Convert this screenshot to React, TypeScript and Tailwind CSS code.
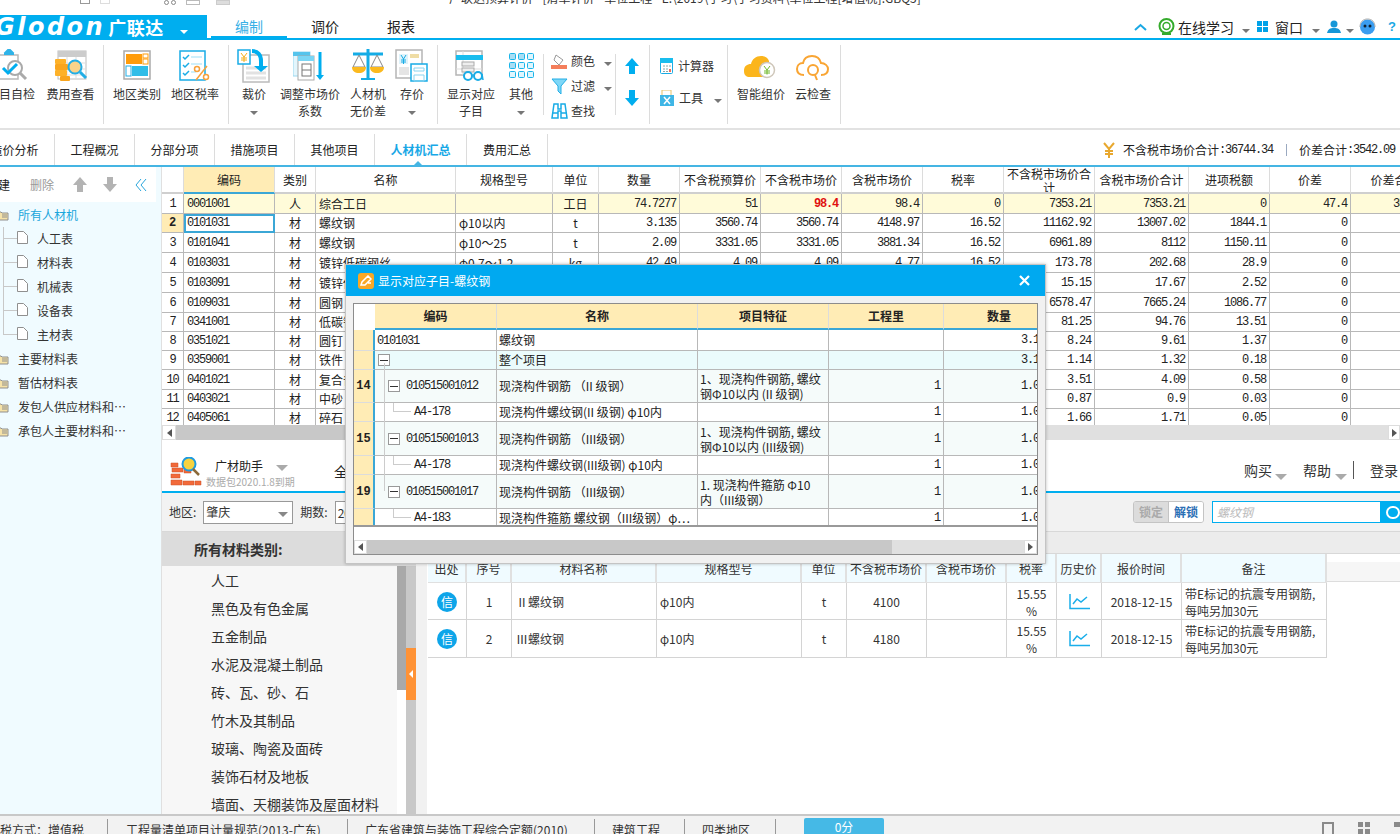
import type { ReactNode } from "react";

const mono = "font-['Liberation_Mono','Noto_Sans_CJK_SC',monospace] text-[12px] tracking-[-1.2px]";

function Caret({ className = "border-t-[#777]" }: { className?: string }) {
  return <span className={`inline-block w-0 h-0 border-x-[4px] border-x-transparent border-t-[4px] ${className}`} />;
}

/* ---------- ribbon icons ---------- */
function Svg({ children, w = 34, h = 34 }: { children: ReactNode; w?: number; h?: number }) {
  return (
    <svg width={w} height={h} viewBox={`0 0 ${w} ${h}`} fill="none" className="shrink-0">
      {children}
    </svg>
  );
}

const icons: Record<string, ReactNode> = {
  check: (
    <Svg>
      <rect x="2" y="6" width="22" height="24" fill="#fff" stroke="#b9b9b9" strokeWidth="1.5" />
      <path d="M12 3h6l-3-3zM10 5h10" stroke="#2fb3e8" strokeWidth="2" />
      <circle cx="21" cy="19" r="7" fill="#fff" stroke="#aaa" strokeWidth="2" />
      <path d="M26 24l6 6" stroke="#aaa" strokeWidth="3" />
      <path d="M9 19l5 5 9-9" stroke="#00aeef" strokeWidth="3" />
    </Svg>
  ),
  fee: (
    <Svg>
      <rect x="4" y="2" width="28" height="28" fill="#fff" stroke="#bdbdbd" />
      <rect x="4" y="2" width="28" height="6" fill="#ccc" />
      <path d="M4 14h28M4 20h28M4 26h28M13 8v22M22 8v22" stroke="#ddd" />
      <rect x="1" y="10" width="11" height="5" rx="1" fill="#fdb129" />
      <rect x="1" y="15" width="13" height="6" rx="1" fill="#f9a51e" />
      <rect x="1" y="21" width="12" height="6" rx="1" fill="#fdb129" />
      <rect x="6" y="27" width="10" height="5" rx="1" fill="#f9a51e" />
      <circle cx="21" cy="18" r="6.5" fill="#fbd38a" stroke="#23aee6" strokeWidth="2" />
      <path d="M26 23l6 6" stroke="#23aee6" strokeWidth="3" />
    </Svg>
  ),
  area: (
    <Svg>
      <rect x="4" y="2" width="26" height="28" fill="#fff" stroke="#aaa" strokeWidth="1.5" />
      <rect x="6" y="5" width="16" height="10" fill="#ff9c0a" />
      <rect x="23" y="5" width="5" height="4" fill="#fff" stroke="#ff9c0a" />
      <rect x="23" y="10" width="5" height="5" fill="#fff" stroke="#ff9c0a" />
      <rect x="6" y="17" width="5" height="10" fill="#fff" stroke="#23aee6" />
      <rect x="12" y="17" width="16" height="10" fill="#2fbde8" />
    </Svg>
  ),
  tax: (
    <Svg>
      <rect x="2" y="2" width="25" height="29" fill="#fff" stroke="#19ace6" strokeWidth="1.5" />
      <path d="M5 8l2 2 4-4M5 16l2 2 4-4M5 24l2 2 4-4" stroke="#19ace6" strokeWidth="1.5" />
      <path d="M13 8h11M13 15h11M13 23h5" stroke="#bfeafa" strokeWidth="1.5" />
      <circle cx="19" cy="20" r="2.5" fill="#fff" stroke="#f7a13b" strokeWidth="1.5" />
      <circle cx="28" cy="28" r="2.5" fill="#fff" stroke="#f7a13b" strokeWidth="1.5" />
      <path d="M29 17L18 31" stroke="#f7a13b" strokeWidth="1.5" />
    </Svg>
  ),
  cut: (
    <Svg>
      <rect x="6" y="6" width="26" height="27" fill="#fff" stroke="#bbb" strokeWidth="1.5" />
      <path d="M9 19h20M9 24h20M9 29h20" stroke="#e2e2e2" strokeWidth="3" />
      <rect x="1" y="1" width="12" height="14" fill="#fff" stroke="#19ace6" strokeWidth="1.5" />
      <path d="M4 4l3 4 3-4M7 8v5M4 9h6M4 11h6" stroke="#f3ad19" />
      <path d="M15 2c6 0 9 4 9 10v6" stroke="#00aeef" strokeWidth="4" />
      <path d="M17 17h14l-7 6z" fill="#00aeef" />
    </Svg>
  ),
  adjust: (
    <Svg>
      <rect x="0" y="3" width="17" height="24" fill="#e3f6fd" stroke="#9bd8ef" />
      <rect x="0" y="3" width="17" height="4" fill="#55c4ec" />
      <rect x="5" y="7" width="16" height="24" fill="#fff" stroke="#aaa" />
      <rect x="5" y="7" width="16" height="5" fill="#7ad6f5" />
      <rect x="9" y="15" width="9" height="12" fill="#fff" stroke="#777" />
      <path d="M9 21h9" stroke="#777" />
      <path d="M27 3v24" stroke="#00aeef" strokeWidth="3" />
      <path d="M23 26h8l-4 5z" fill="#00aeef" />
    </Svg>
  ),
  scale: (
    <Svg>
      <path d="M17 0v29M2 5h30" stroke="#14ace6" strokeWidth="3" />
      <path d="M10 31h14v-2H10z" fill="#14ace6" />
      <path d="M8 6L2 18h12zM26 6l-6 12h12z" stroke="#888" fill="#fff" />
      <path d="M1 18h14c0 4-3 6-7 6s-7-2-7-6zM19 18h14c0 4-3 6-7 6s-7-2-7-6z" fill="#fbb91e" />
    </Svg>
  ),
  save: (
    <Svg>
      <rect x="1" y="1" width="26" height="28" fill="#fff" stroke="#b5b5b5" strokeWidth="1.5" />
      <rect x="4" y="5" width="9" height="10" fill="#dff3fb" />
      <path d="M6 6l2.500 4 2.500-4M8.500 10v5M6 11h5M6 13h5" stroke="#18ace6" />
      <rect x="15" y="5" width="9" height="4" fill="#efdda5" />
      <rect x="4" y="18" width="10" height="8" fill="#e5e5e5" />
      <rect x="16" y="15" width="16" height="17" fill="#fff" stroke="#19ace6" strokeWidth="1.5" />
      <path d="M19 19h10v3H19zM19 26h10v6H19z" stroke="#8ad4f0" />
    </Svg>
  ),
  show: (
    <Svg>
      <rect x="2" y="2" width="26" height="24" fill="#fff" stroke="#b5b5b5" strokeWidth="1.5" />
      <path d="M2 8h26M2 20h26M9 2v24" stroke="#ddd" />
      <rect x="2" y="6" width="27" height="5" fill="#19bdee" />
      <rect x="8" y="13" width="12" height="4" fill="#eee" stroke="#aaa" />
      <rect x="8" y="19" width="12" height="4" fill="#eee" stroke="#aaa" />
      <circle cx="14" cy="27" r="4" fill="#fff" stroke="#19ace6" strokeWidth="2" />
      <circle cx="24" cy="27" r="4" fill="#fff" stroke="#19ace6" strokeWidth="2" />
      <path d="M28 25l1 6" stroke="#19ace6" strokeWidth="1.500" />
    </Svg>
  ),
  more: (
    <Svg>
      {[0, 1, 2].map((r) =>
        [0, 1, 2].map((c) => (
          <rect
            key={`${r}${c}`}
            x={5.5 + c * 9}
            y={4.5 + r * 9}
            width="6"
            height="6"
            rx="1"
            fill={r + c < 2 ? "#a9def4" : "#dff5fd"}
            stroke="#19b5ea"
          />
        )),
      )}
    </Svg>
  ),
  smart: (
    <Svg w={36} h={34}>
      <path d="M1 22c0-5 3-7 7-7 1-5 5-8 10-8 4 0 7 2 8 5v16H7c-4 0-6-2-6-6z" fill="#fbb51c" />
      <circle cx="24" cy="21" r="7.500" fill="#fff" stroke="#cfc7ba" strokeWidth="1.500" />
      <path d="M21 17l3 4 3-4M24 21v4.500M21 22h6M21 24h6" stroke="#70b92c" />
    </Svg>
  ),
  cloud: (
    <Svg w={36} h={34}>
      <path
        d="M9 26c-4 0-7-2-7-6 0-3 2-6 6-6 1-5 5-7 9-7 5 0 8 3 9 7 4 0 7 3 7 6 0 4-3 6-7 6"
        stroke="#f9a533"
        strokeWidth="2"
      />
      <circle cx="18" cy="21" r="5" stroke="#f9a533" strokeWidth="2" />
      <path d="M20 26l2 5" stroke="#f9a533" strokeWidth="2" />
    </Svg>
  ),
};

function RibbonBtn({ w, icon, label, caret }: { w: string; icon: string; label: string; caret?: boolean }) {
  return (
    <div className={`${w} shrink-0 flex flex-col items-center pt-[8px]`}>
      <div className="h-[36px] flex items-center justify-center">{icons[icon]}</div>
      <div className="mt-[1px] text-[12px] leading-[17px] text-center text-[#333] whitespace-pre-line">{label}</div>
      {caret && (
        <div className="mt-[2px] leading-[8px]">
          <Caret />
        </div>
      )}
    </div>
  );
}

function RibbonGroup({ w, children }: { w: string; children: ReactNode }) {
  return (
    <div className={`${w} shrink-0 h-[79px] mt-[5px] flex border-r border-[#dcdcdc]`}>
      <div className="flex -mt-[5px] h-[88px]">{children}</div>
    </div>
  );
}

function Ribbon() {
  return (
    <div className="h-[90px] flex border-b-2 border-[#e2e2e2] overflow-hidden">
      <RibbonGroup w="w-[104px]">
        <div className="-ml-[19px] flex">
          <RibbonBtn w="w-[60px]" icon="check" label="项目自检" />
          <RibbonBtn w="w-[59px]" icon="fee" label="费用查看" />
        </div>
      </RibbonGroup>
      <RibbonGroup w="w-[125px]">
        <div className="ml-[4px] flex">
          <RibbonBtn w="w-[58px]" icon="area" label="地区类别" />
          <RibbonBtn w="w-[58px]" icon="tax" label="地区税率" />
        </div>
      </RibbonGroup>
      <RibbonGroup w="w-[209px]">
        <div className="ml-[5px] flex">
          <RibbonBtn w="w-[40px]" icon="cut" label="裁价" caret />
          <RibbonBtn w="w-[72px]" icon="adjust" label={"调整市场价\n系数"} />
          <RibbonBtn w="w-[44px]" icon="scale" label={"人材机\n无价差"} />
          <RibbonBtn w="w-[44px]" icon="save" label="存价" caret />
        </div>
      </RibbonGroup>
      <RibbonGroup w="w-[212px]">
        <div className="ml-[5px] flex shrink-0">
          <RibbonBtn w="w-[56px]" icon="show" label={"显示对应\n子目"} />
          <RibbonBtn w="w-[44px]" icon="more" label="其他" caret />
          <div className="w-[73px] shrink-0 h-[61px] mt-[14px] border-x border-[#dcdcdc] pl-[7px] text-[12px] text-[#333] whitespace-nowrap">
            <div className="-mt-[6px]">
              <div className="h-[25px] flex items-center gap-[3px]">
                <Svg w={17} h={17}>
                  <path d="M5 3l7 5-4 5-5-5z" fill="#fff" stroke="#999" />
                  <rect x="0" y="13" width="16" height="4" fill="#f47e5b" />
                </Svg>
                <span>颜色</span>
                <span className="ml-[6px] leading-none"><Caret /></span>
              </div>
              <div className="h-[25px] flex items-center gap-[3px]">
                <Svg w={17} h={17}>
                  <path d="M1 2h15l-6 7v8l-3-3V9z" fill="#7fd7f7" stroke="#23aee6" />
                </Svg>
                <span>过滤</span>
                <span className="ml-[6px] leading-none"><Caret /></span>
              </div>
              <div className="h-[25px] flex items-center gap-[3px]">
                <Svg w={17} h={17}>
                  <path d="M3 2h4v5h3V2h4l2 14h-6V9H7v7H1z" fill="#fff" stroke="#18ace6" strokeWidth="1.500" />
                  <path d="M1 11h6M10 11h6" stroke="#18ace6" strokeWidth="1.500" />
                </Svg>
                <span>查找</span>
              </div>
            </div>
          </div>
          <div className="w-[31px] shrink-0 flex flex-col items-center pt-[17px] gap-[16px]">
            <Svg w={16} h={17}>
              <path d="M8 1l7 8h-4v8H5V9H1z" fill="#00aeef" />
            </Svg>
            <Svg w={16} h={17}>
              <path d="M8 16L1 8h4V0h6v8h4z" fill="#00aeef" />
            </Svg>
          </div>
        </div>
      </RibbonGroup>
      <RibbonGroup w="w-[78px]">
        <div className="ml-[10px] pt-[16px] flex flex-col gap-[12px] text-[12px] text-[#333] whitespace-nowrap">
          <div className="h-[20px] flex items-center gap-[5px]">
            <Svg w={13} h={16}>
              <rect x="0.500" y="0.500" width="12" height="15" rx="1" fill="#fff" stroke="#19ace6" />
              <rect x="0" y="0" width="13" height="5" fill="#19bdee" />
              <path d="M3 8h2M6 8h2M9 8h2M3 11h2M6 11h2M3 13.500h2M6 13.500h2" stroke="#8aa" />
              <path d="M9 11h2v3H9z" fill="#ef6d5a" />
            </Svg>
            <span>计算器</span>
          </div>
          <div className="h-[20px] flex items-center gap-[5px]">
            <Svg w={14} h={16}>
              <rect x="2" y="0" width="9" height="8" fill="#fff" stroke="#e6c268" />
              <rect x="0" y="5" width="14" height="11" fill="#3fb6e6" />
              <path d="M4 7l6 7M10 7l-6 7" stroke="#fff" strokeWidth="1.500" />
            </Svg>
            <span>工具</span>
            <span className="ml-[6px] leading-none"><Caret /></span>
          </div>
        </div>
      </RibbonGroup>
      <RibbonGroup w="w-[113px]">
        <div className="ml-[6px] flex">
          <RibbonBtn w="w-[54px]" icon="smart" label="智能组价" />
          <RibbonBtn w="w-[50px]" icon="cloud" label="云检查" />
        </div>
      </RibbonGroup>
    </div>
  );
}

function TopBars() {
  return (
    <>
      <div className="h-[15px] overflow-hidden relative flex">
        <div className="flex items-start gap-[10px] pl-[80px] pt-0">
          <span className="w-[10px] h-[4px] border-b border-x border-[#999]" />
          <span className="w-[10px] h-[4px] border-b border-x border-[#ddd]" />
          <span className="ml-[44px] w-[5px] h-[5px] rounded-full border border-[#888]" />
          <span className="w-[5px] h-[5px] rounded-full border border-[#888] -ml-[8px]" />
          <span className="w-[14px] h-[5px] border border-[#bbb]" />
          <span className="ml-[6px] w-[14px] h-[5px] bg-[#ddd] border border-[#ccc]" />
          <span className="ml-[6px] mt-[1px]"><Caret className="border-t-[#555]" /></span>
        </div>
        <div className="ml-[195px] -mt-[11px] text-[12px] leading-[18px] text-[#333] whitespace-nowrap">
          广联达预算计价 - [清单计价 - 单位工程 - E:\2019\学习\学习资料\单位工程[增值税].GBQ5]
        </div>
      </div>
      <div className="h-[25px] flex border-b-2 border-[#00aeef]">
        <div className="w-[207px] h-[24px] bg-[#00aeef] text-white flex items-center overflow-hidden whitespace-nowrap">
          <span className="-ml-[5px] font-['DejaVu_Sans',sans-serif] italic font-bold text-[24px] tracking-[2.5px] leading-none">Glodon</span>
          <span className="ml-[3px] text-[18px] tracking-[0.5px] leading-none font-bold">广联达</span>
          <span className="ml-[16px] leading-none"><Caret className="border-t-white" /></span>
        </div>
        <div className="ml-[4px] w-[76px] h-[25px] text-center text-[14px] leading-[23px] text-[#3ab0e6] border-b-[4px] border-[#00aeef]">编制</div>
        <div className="w-[76px] h-[23px] text-center text-[14px] leading-[23px] text-[#222]">调价</div>
        <div className="w-[76px] h-[23px] text-center text-[14px] leading-[23px] text-[#222]">报表</div>
        <div className="ml-auto h-[23px] flex items-center pr-[4px] text-[14px] text-[#222]">
          <Svg w={13} h={8}>
            <path d="M1 7l5.500-5L12 7" stroke="#1aa8e4" strokeWidth="2" />
          </Svg>
          <span className="ml-[11px]">
            <Svg w={17} h={17}>
              <circle cx="8.500" cy="8" r="7" stroke="#35ab2c" strokeWidth="2" />
              <circle cx="8.500" cy="8" r="3.500" stroke="#35ab2c" strokeWidth="1.500" />
              <path d="M4 16h9" stroke="#35ab2c" strokeWidth="2" />
            </Svg>
          </span>
          <span className="ml-[3px] mt-[2px]">在线学习</span>
          <span className="ml-[8px] leading-none"><Caret /></span>
          <span className="ml-[7px] grid grid-cols-2 gap-[1px]">
            <i className="w-[5px] h-[5px] bg-[#00a2e8]" />
            <i className="w-[5px] h-[5px] bg-[#00a2e8]" />
            <i className="w-[5px] h-[5px] bg-[#00a2e8]" />
            <i className="w-[5px] h-[5px] bg-[#00a2e8]" />
          </span>
          <span className="ml-[7px] mt-[2px]">窗口</span>
          <span className="ml-[9px] leading-none"><Caret /></span>
          <span className="ml-[7px]">
            <Svg w={14} h={13}>
              <circle cx="7" cy="4" r="3.500" fill="#1597d8" />
              <path d="M0 13c1-4 3-5 7-5s6 1 7 5z" fill="#1597d8" />
            </Svg>
          </span>
          <span className="ml-[5px] leading-none"><Caret /></span>
          <span className="ml-[5px]">
            <Svg w={17} h={17}>
              <circle cx="8.500" cy="9" r="7.500" fill="#3b9df0" />
              <path d="M1 9c0-5 3-8 7.500-8S16 4 16 9" stroke="#aaa" />
              <circle cx="6" cy="8" r="1.500" fill="#123" />
              <circle cx="11" cy="8" r="1.500" fill="#123" />
            </Svg>
          </span>
          <span className="ml-[12px] text-[#1aa8e4] font-bold text-[13px] font-['Liberation_Sans',sans-serif]">?</span>
        </div>
      </div>
    </>
  );
}

function SubTabs() {
  const tabs = ["造价分析", "工程概况", "分部分项", "措施项目", "其他项目"];
  return (
    <div className="h-[37px] flex items-end pt-[4px] border-b-2 border-[#45b5e3] text-[12px] text-[#222] shrink-0">
      <div className="flex h-[31px] -ml-[25px]">
        {tabs.map((t) => (
          <div key={t} className="w-[80px] border-r border-[#dcdcdc] flex items-center justify-center">{t}</div>
        ))}
        <div className="relative w-[92px] border-r border-[#dcdcdc] flex items-center justify-center font-bold text-[#18a8e6]">
          人材机汇总
          <span className="absolute bottom-0 left-[39px] w-0 h-0 border-x-[4px] border-x-transparent border-b-[4px] border-b-[#45b5e3]" />
        </div>
        <div className="w-[81px] border-r border-[#dcdcdc] flex items-center justify-center">费用汇总</div>
      </div>
      <div className="ml-auto h-[31px] flex items-center pr-[5px]">
        <Svg w={12} h={16}>
          <path d="M1 1l5 6 5-6M6 7v9M2 9h8M2 12h8" stroke="#e8a82f" strokeWidth="2" />
        </Svg>
        <span className="ml-[8px]">不含税市场价合计</span>
        <span className={mono}>:36744.34</span>
        <span className="ml-[13px] mr-[12px] w-px h-[12px] bg-[#9aa9c0]" />
        <span>价差合计</span>
        <span className={mono}>:3542.09</span>
      </div>
    </div>
  );
}

/* ---------- left tree ---------- */
function Folder() {
  return (
    <svg width="11" height="11" viewBox="0 0 11 11" fill="none" className="shrink-0 -ml-[2px]">
      <path d="M0 2h3l1 1h6v7H0z" fill="#f6e2a7" stroke="#8f8f8f" />
      <path d="M4 5h5M4 7h5" stroke="#8f8f8f" />
    </svg>
  );
}

function Sidebar() {
  const top = ["主要材料表", "暂估材料表", "发包人供应材料和…", "承包人主要材料和…"];
  const kids = ["人工表", "材料表", "机械表", "设备表", "主材表"];
  return (
    <div className="w-[162px] shrink-0 bg-[#f0fbff] border-r border-[#e0e0e0] flex flex-col text-[12px] text-[#333]">
      <div className="h-[35px] w-[156px] bg-white flex items-center">
        <span className="-ml-[2px] w-[32px] text-[#222]">建</span>
        <span className="text-[#999]">删除</span>
        <span className="ml-[19px]">
          <Svg w={14} h={15}>
            <path d="M7 0l7 8h-4v7H4V8H0z" fill="#b3b3b3" />
          </Svg>
        </span>
        <span className="ml-[16px]">
          <Svg w={14} h={15}>
            <path d="M7 15L0 7h4V0h6v7h4z" fill="#b3b3b3" />
          </Svg>
        </span>
        <span className="ml-[18px]">
          <Svg w={12} h={14}>
            <path d="M6 1L1 7l5 6M11 1L6 7l5 6" stroke="#2aa6dc" />
          </Svg>
        </span>
      </div>
      <div className="pt-[1px]">
        <div className="h-[24px] flex items-center gap-[9px] text-[#1aa6dc]">
          <Folder />
          所有人材机
        </div>
        {kids.map((k, i) => (
          <div key={k} className="h-[24px] flex items-center">
            <div className={`ml-[3px] w-[14px] h-full ${i === 4 ? "" : "border-l border-[#c8c8c8]"}`}>
              <div className={`h-[12px] border-b border-[#c8c8c8] ${i === 4 ? "border-l" : ""}`} />
            </div>
            <svg width="11" height="13" viewBox="0 0 11 13" fill="none" className="shrink-0 mr-[9px] -mt-[3px]">
              <path d="M.5.500h6l4 4v8H.5z" fill="#fff" stroke="#8f8f8f" />
            </svg>
            {k}
          </div>
        ))}
        {top.map((t) => (
          <div key={t} className="h-[24px] flex items-center gap-[9px] whitespace-nowrap">
            <Folder />
            {t}
          </div>
        ))}
      </div>
    </div>
  );
}

/* ---------- upper data grid ---------- */
const gridHead = ["", "编码", "类别", "名称", "规格型号", "单位", "数量", "不含税预算价", "不含税市场价", "含税市场价", "税率", "不含税市场价合计", "含税市场价合计", "进项税额", "价差", "价差合计"];
const gridCols = ["w-[22px]", "w-[91px]", "w-[41px]", "w-[140px]", "w-[97px]", "w-[46px]", "w-[81px]", "w-[81px]", "w-[81px]", "w-[81px]", "w-[81px]", "w-[91px]", "w-[94px]", "w-[81px]", "w-[81px]", "w-[88px]"];
const rowH = ["h-[20px]", "h-[19px]", "h-[20px]", "h-[20px]", "h-[20px]", "h-[20px]", "h-[19px]", "h-[19px]", "h-[19px]", "h-[20px]", "h-[19px]", "h-[18px]"];
const gridRows: string[][] = [
  ["1", "0001001", "人", "综合工日", "", "工日", "74.7277", "51", "98.4", "98.4", "0", "7353.21", "7353.21", "0", "47.4", "3542.09"],
  ["2", "0101031", "材", "螺纹钢", "φ10以内", "t", "3.135", "3560.74", "3560.74", "4148.97", "16.52", "11162.92", "13007.02", "1844.1", "0", ""],
  ["3", "0101041", "材", "螺纹钢", "φ10～25", "t", "2.09", "3331.05", "3331.05", "3881.34", "16.52", "6961.89", "8112", "1150.11", "0", ""],
  ["4", "0103031", "材", "镀锌低碳钢丝", "φ0.7～1.2", "kg", "42.49", "4.09", "4.09", "4.77", "16.52", "173.78", "202.68", "28.9", "0", ""],
  ["5", "0103091", "材", "镀锌低碳钢丝", "", "", "", "", "", "", "", "15.15", "17.67", "2.52", "0", ""],
  ["6", "0109031", "材", "圆钢", "", "", "", "", "", "", "", "6578.47", "7665.24", "1086.77", "0", ""],
  ["7", "0341001", "材", "低碳钢焊条", "", "", "", "", "", "", "", "81.25", "94.76", "13.51", "0", ""],
  ["8", "0351021", "材", "圆钉", "", "", "", "", "", "", "", "8.24", "9.61", "1.37", "0", ""],
  ["9", "0359001", "材", "铁件", "", "", "", "", "", "", "", "1.14", "1.32", "0.18", "0", ""],
  ["10", "0401021", "材", "复合普通硅酸盐水泥", "", "", "", "", "", "", "", "3.51", "4.09", "0.58", "0", ""],
  ["11", "0403021", "材", "中砂", "", "", "", "", "", "", "", "0.87", "0.9", "0.03", "0", ""],
  ["12", "0405061", "材", "碎石", "", "", "", "", "", "", "", "1.66", "1.71", "0.05", "0", ""],
];

function DataGrid() {
  const line = "border-r border-b border-[#b8b8b8]";
  return (
    <div className="h-[273px] flex flex-col overflow-hidden shrink-0">
      <div className="h-[258px] overflow-hidden">
        <table className="table-fixed border-separate border-spacing-0 w-[1277px] text-[12px] text-[#222]">
          <colgroup>
            {gridCols.map((c, i) => (
              <col key={i} className={c} />
            ))}
          </colgroup>
          <thead>
            <tr className="h-[25px]">
              {gridHead.map((h, i) => (
                <th
                  key={i}
                  className={`font-normal p-0 border-r border-[#dcdcdc] border-b-2 overflow-hidden whitespace-normal leading-[14px] ${
                    i === 1 ? "bg-[#ffecb5] font-bold border-b-[#3ba7d6]" : "bg-white border-b-[#cfcfcf]"
                  }`}
                >
                  <div className="max-h-[25px]">{h}</div>
                </th>
              ))}
            </tr>
          </thead>
          <tbody>
            {gridRows.map((r, ri) => (
              <tr key={r[0]} className={rowH[ri]}>
                {r.map((v, i) => {
                  const num = i >= 6;
                  const idx = i === 0;
                  let cls = `${line} py-0 px-[3px] whitespace-nowrap overflow-hidden `;
                  if (idx) cls += ri === 1 ? "bg-[#ffecb5] text-center font-['Liberation_Mono',monospace] text-[12px] font-bold" : `bg-white text-center ${mono}`;
                  else if (num) cls += `text-right ${mono}`;
                  else if (i === 1) cls += `text-left ${mono}`;
                  else if (i === 2 || i === 5) cls += "text-center";
                  else cls += "text-left";
                  if (ri === 0 && !idx) cls += " bg-[#fffbd9]";
                  if (ri === 1 && i === 1) cls += " outline-2 -outline-offset-2 outline-[#3ba7d6]";
                  if (ri === 0 && i === 8) cls += " text-[#e01010] font-bold";
                  return (
                    <td key={i} className={cls}>
                      <div className="leading-[16px]">{v}</div>
                    </td>
                  );
                })}
              </tr>
            ))}
          </tbody>
        </table>
      </div>
      <div className="h-[15px] flex bg-[#e0e0e0]">
        <div className="w-[14px] bg-white border border-[#ddd] flex items-center justify-center">
          <span className="w-0 h-0 border-y-[4px] border-y-transparent border-r-[5px] border-r-[#555]" />
        </div>
        <div className="w-[800px] bg-[#c8c8c8]" />
        <div className="ml-auto w-[12px] bg-white border border-[#ddd] flex items-center justify-center">
          <span className="w-0 h-0 border-y-[4px] border-y-transparent border-l-[5px] border-l-[#555]" />
        </div>
      </div>
    </div>
  );
}

/* ---------- lower price panel ---------- */
const cats = ["人工", "黑色及有色金属", "五金制品", "水泥及混凝土制品", "砖、瓦、砂、石", "竹木及其制品", "玻璃、陶瓷及面砖", "装饰石材及地板", "墙面、天棚装饰及屋面材料"];
const priceHead = ["出处", "序号", "材料名称", "规格型号", "单位", "不含税市场价", "含税市场价", "税率", "历史价", "报价时间", "备注"];
const priceCols = ["w-[39px]", "w-[45px]", "w-[145px]", "w-[145px]", "w-[45px]", "w-[80px]", "w-[80px]", "w-[50px]", "w-[45px]", "w-[80px]", "w-[145px]"];
const priceRows = [
  { n: "1", name: "Ⅱ螺纹钢", price: "4100", h: "h-[37px]" },
  { n: "2", name: "Ⅲ螺纹钢", price: "4180", h: "h-[38px]" },
];

function Trend() {
  return (
    <svg width="21" height="16" viewBox="0 0 21 16" fill="none" className="mx-auto">
      <path d="M1 0v14.500h20" stroke="#1aaeea" strokeWidth="1.500" />
      <path d="M4 10l4-5 4 3 6-5" stroke="#1aaeea" strokeWidth="1.500" />
    </svg>
  );
}

function BigCaret() {
  return <span className="inline-block w-0 h-0 border-x-[6px] border-x-transparent border-t-[6px] border-t-[#aaa]" />;
}

function PricePanel() {
  const cell = "border-r border-b border-[#d4d4d4] text-center p-0 pt-[1px]";
  return (
    <div className="flex-1 min-h-0 flex flex-col text-[12px] text-[#333]">
      <div className="h-[53px] shrink-0 border-b-2 border-[#00aeef] flex">
        <div className="ml-[8px] mt-[17px]">
          <svg width="32" height="32" viewBox="0 0 32 32" fill="none">
            <path d="M1 6h7v4H1zM2 11h11v4H2zM14 11h7v5h-7zM1 17h9v4H1zM1 23h11v5H1zM13 24h11v4H13zM25 24h6v4h-6z" fill="#f2693a" stroke="#c9502a" strokeWidth=".5" />
            <circle cx="19" cy="7" r="6.500" fill="#f7d23e" stroke="#1e9be0" strokeWidth="2" />
            <path d="M23 12l6 6" stroke="#8c6a3a" strokeWidth="2.500" />
          </svg>
        </div>
        <div className="ml-[13px] mt-[18px] w-[111px]">
          <div className="leading-[16px] flex items-center">
            <span className="text-[12px] text-[#222]">广材助手</span>
            <span className="ml-[13px] leading-none"><BigCaret /></span>
          </div>
          <div className="-ml-[9px] mt-[1px] text-[10px] leading-[13px] text-[#aaa] whitespace-nowrap">数据包2020.1.8到期</div>
        </div>
        <div className="mt-[21px] ml-[8px] text-[14px] text-[#222]">全部</div>
        <div className="ml-auto mt-[21px] mr-[2px] flex items-start text-[14px] leading-[18px]">
          <span>购买</span>
          <span className="ml-[3px] mt-[6px] leading-none"><BigCaret /></span>
          <span className="ml-[16px]">帮助</span>
          <span className="ml-[4px] mt-[6px] leading-none"><BigCaret /></span>
          <span className="ml-[6px] w-px h-[18px] bg-[#555]" />
          <span className="ml-[16px]">登录</span>
        </div>
      </div>
      <div className="h-[39px] shrink-0 bg-[#f2f2f2] border-b border-[#d8d8d8] flex items-center">
        <span className="ml-[7px]">地区:</span>
        <div className="ml-[7px] w-[90px] h-[23px] bg-white border border-[#999] flex items-center justify-between pl-[2px] pr-[4px]">
          肇庆
          <span className="leading-none"><Caret className="border-t-[#888] !border-x-[5px] !border-t-[5px]" /></span>
        </div>
        <span className="ml-[7px]">期数:</span>
        <div className="ml-[7px] w-[90px] h-[23px] bg-white border border-[#999] pl-[2px] leading-[21px]">2020</div>
        <div className="ml-auto flex h-[22px] border border-[#c4c4c4] rounded-[3px] overflow-hidden font-bold">
          <span className="w-[35px] text-center leading-[20px] bg-[#dcdcdc] text-[#aaa] border-r border-[#c4c4c4]">锁定</span>
          <span className="w-[34px] text-center leading-[20px] bg-white text-[#2b6fb5]">解锁</span>
        </div>
        <div className="ml-[8px] w-[188px] h-[22px] flex border border-[#00aeef] bg-white">
          <span className="flex-1 pl-[4px] italic text-[#bbb] leading-[20px]">螺纹钢</span>
          <span className="w-[19px] bg-[#00aeef] pl-[6px] pt-[4px]">
            <span className="block w-[14px] h-[13px] rounded-full border-2 border-white" />
          </span>
        </div>
      </div>
      <div className="flex-1 min-h-0 flex overflow-hidden">
        <div className="w-[254px] shrink-0 flex flex-col">
          <div className="h-[34px] shrink-0 bg-[#dcdcdc] pl-[32px] text-[14px] font-bold leading-[34px] text-[#333]">所有材料类别:</div>
          <div className="flex-1 min-h-0 flex">
            <div className="w-[235px] bg-[#f7f7f7] pl-[49px] text-[14px] whitespace-nowrap overflow-hidden">
              {cats.map((c) => (
                <div key={c} className="h-[28px] leading-[28px]">{c}</div>
              ))}
            </div>
            <div className="w-[9px] bg-white">
              <div className="h-[124px] bg-[#a9a9a9]" />
            </div>
            <div className="w-[10px] bg-[#c8c8c8]">
              <div className="mt-[82px] h-[52px] bg-[#ff9235] flex items-center justify-center">
                <span className="w-0 h-0 border-y-[4px] border-y-transparent border-r-[4px] border-r-white" />
              </div>
            </div>
          </div>
        </div>
        <div className="w-[11px] shrink-0 bg-[#f1f1f1]" />
        <div className="flex-1 min-w-0 flex flex-col">
          <div className="h-[22px] shrink-0 bg-[#ececec] border-b border-[#d8d8d8]" />
          <div className="flex flex-1 bg-white">
            <table className="table-fixed border-separate border-spacing-0 w-[899px] ml-[1px] self-start">
              <colgroup>
                {priceCols.map((c, i) => (
                  <col key={i} className={c} />
                ))}
              </colgroup>
              <thead>
                <tr className="h-[29px]">
                  {priceHead.map((h) => (
                    <th key={h} className="font-normal bg-[#f0fbff] border-r-2 border-b border-[#e0e0e0] p-0 pt-[2px] whitespace-nowrap overflow-hidden">{h}</th>
                  ))}
                </tr>
              </thead>
              <tbody>
                {priceRows.map((r) => (
                  <tr key={r.n} className={r.h}>
                    <td className={cell}>
                      <span className="mx-auto block w-[20px] h-[20px] rounded-full bg-[#0ea5e9] text-white leading-[20px]">信</span>
                    </td>
                    <td className={cell}>{r.n}</td>
                    <td className={`${cell} !text-left pl-[4px]`}>{r.name}</td>
                    <td className={`${cell} !text-left pl-[3px]`}>φ10内</td>
                    <td className={cell}>t</td>
                    <td className={cell}>{r.price}</td>
                    <td className={cell} />
                    <td className={`${cell} leading-[17px]`}>15.55<br />%</td>
                    <td className={cell}><Trend /></td>
                    <td className={cell}>2018-12-15</td>
                    <td className={`${cell} !text-left pl-[3px] leading-[17px]`}>带E标记的抗震专用钢筋,<br />每吨另加30元</td>
                  </tr>
                ))}
              </tbody>
            </table>
            <div className="flex-1 h-[20px] mt-[8px] bg-[#f6f6f6] border-b border-[#ddd]" />
          </div>
        </div>
      </div>
    </div>
  );
}

/* ---------- dialog ---------- */
type DlgRow = { h: string; no: string; code: string; indent: 0 | 1 | 2 | 3; name: string; feat: ReactNode; qty: string; n: string; bg: string };

const dlgRows: DlgRow[] = [
  { h: "h-[19px]", no: "", code: "0101031", indent: 0, name: "螺纹钢", feat: "", qty: "", n: "3.135", bg: "bg-white" },
  { h: "h-[19px]", no: "", code: "", indent: 1, name: "整个项目", feat: "", qty: "", n: "3.135", bg: "bg-[#ebfbfc]" },
  { h: "h-[33px]", no: "14", code: "010515001012", indent: 2, name: "现浇构件钢筋 （II 级钢）", feat: <>1、现浇构件钢筋, 螺纹<br />钢Φ10以内 (II 级钢)</>, qty: "1", n: "1.045", bg: "bg-[#f5fbfa]" },
  { h: "h-[19px]", no: "", code: "A4-178", indent: 3, name: "现浇构件螺纹钢(II 级钢) φ10内", feat: "", qty: "1", n: "1.045", bg: "bg-white" },
  { h: "h-[34px]", no: "15", code: "010515001013", indent: 2, name: "现浇构件钢筋 （III级钢）", feat: <>1、现浇构件钢筋, 螺纹<br />钢Φ10以内 (III级钢)</>, qty: "1", n: "1.045", bg: "bg-[#f5fbfa]" },
  { h: "h-[19px]", no: "", code: "A4-178", indent: 3, name: "现浇构件螺纹钢(III级钢) φ10内", feat: "", qty: "1", n: "1.045", bg: "bg-white" },
  { h: "h-[34px]", no: "19", code: "010515001017", indent: 2, name: "现浇构件钢筋  （III级钢）", feat: <>1. 现浇构件箍筋 Φ10<br />内（III级钢）</>, qty: "1", n: "1.045", bg: "bg-[#f5fbfa]" },
  { h: "h-[18px]", no: "", code: "A4-183", indent: 3, name: "现浇构件箍筋 螺纹钢（III级钢）φ…", feat: "", qty: "1", n: "1.045", bg: "bg-white" },
];

function Minus() {
  return (
    <span className="inline-flex w-[12px] h-[12px] shrink-0 bg-white border border-[#999] items-center justify-center">
      <i className="w-[8px] h-px bg-[#333]" />
    </span>
  );
}

function Dialog() {
  const line = "border-r border-b border-[#b8b8b8] p-0 overflow-hidden";
  const headCols = ["编码", "名称", "项目特征", "工程里", "数量"];
  return (
    <div className="absolute left-[345px] top-[264px] w-[701px] h-[300px] bg-[#f1f1f1] border border-[#c4c4c4] text-[12px] text-[#222] flex flex-col shadow-[0_0_3px_rgba(0,0,0,0.25)]">
      <div className="h-[31px] shrink-0 bg-[#00a9f0] flex items-center text-white">
        <span className="ml-[12px] w-[16px] h-[16px] rounded-[3px] bg-[#f9a825] flex items-center justify-center">
          <svg width="12" height="12" viewBox="0 0 12 12" fill="none">
            <path d="M1 10l1-3 6-6 3 3-6 6zM8 8h3" stroke="#fff" strokeWidth="1.500" />
          </svg>
        </span>
        <span className="ml-[4px]">显示对应子目-螺纹钢</span>
        <span className="ml-auto mr-[15px]">
          <svg width="11" height="11" viewBox="0 0 11 11" fill="none">
            <path d="M1 1l9 9M10 1l-9 9" stroke="#fff" strokeWidth="2.200" />
          </svg>
        </span>
      </div>
      <div className="mx-[7px] mt-[7px] h-[252px] border border-[#8c8c8c] bg-white flex flex-col overflow-hidden">
        <div className="relative h-[221px] overflow-hidden shrink-0">
          <table className="table-fixed border-separate border-spacing-0 w-[701px]">
            <colgroup>
              <col className="w-[21px]" />
              <col className="w-[122px]" />
              <col className="w-[201px]" />
              <col className="w-[131px]" />
              <col className="w-[115px]" />
              <col className="w-[111px]" />
            </colgroup>
            <thead>
              <tr className="h-[26px]">
                <th className="p-0 bg-white" />
                {headCols.map((h) => (
                  <th key={h} className="p-0 bg-[#ffecb5] font-bold border-r border-[#dcdcdc] border-b-2 border-b-[#3ba7d6]">{h}</th>
                ))}
              </tr>
            </thead>
            <tbody>
              {dlgRows.map((r, i) => (
                <tr key={i} className={r.h}>
                  <td className="p-0 bg-[#ffecb5] border-r-2 border-r-[#3ba7d6] border-b border-b-[#dcdcdc] text-center font-['Liberation_Mono',monospace] font-bold text-[12px]">{r.no}</td>
                  <td className={`${line} ${r.bg} relative`}>
                    {r.indent === 0 && <span className={`${mono} pl-[2px]`}>{r.code}</span>}
                    {r.indent === 1 && <span className="flex pl-[3px]"><Minus /></span>}
                    {r.indent === 2 && (
                      <span className="flex items-center pl-[13px] gap-[6px]">
                        <Minus />
                        <span className={mono}>{r.code}</span>
                      </span>
                    )}
                    {r.indent === 3 && (
                      <span className="flex items-center pl-[18px]">
                        <i className="w-[18px] h-[10px] -mt-[10px] border-l border-b border-[#ccc]" />
                        <span className={`${mono} ml-[3px]`}>{r.code}</span>
                      </span>
                    )}
                  </td>
                  <td className={`${line} ${r.bg} px-[2px] whitespace-nowrap`}>{r.name}</td>
                  <td className={`${line} ${r.bg} px-[2px] leading-[15px]`}>{r.feat}</td>
                  <td className={`${line} ${r.bg} text-right pr-[3px] ${mono}`}>{r.qty}</td>
                  <td className={`${line} ${r.bg} text-right pr-[3px] ${mono}`}>{r.n}</td>
                </tr>
              ))}
            </tbody>
          </table>
          {/* tree trunk that runs through the code column */}
          <span className="absolute left-[30px] top-[59px] w-px h-[128px] bg-[#ccc]" />
        </div>
        <div className="h-[15px] shrink-0 border-t-2 border-[#999]" />
        <div className="h-[14px] shrink-0 flex bg-[#e0e0e0]">
          <div className="w-[13px] bg-white border border-[#ddd] flex items-center justify-center">
            <span className="w-0 h-0 border-y-[4px] border-y-transparent border-r-[5px] border-r-[#555]" />
          </div>
          <div className="w-[525px] bg-[#c8c8c8]" />
          <div className="ml-auto w-[13px] bg-white border border-[#ddd] flex items-center justify-center">
            <span className="w-0 h-0 border-y-[4px] border-y-transparent border-l-[5px] border-l-[#555]" />
          </div>
        </div>
      </div>
    </div>
  );
}

function StatusBar() {
  return (
    <div className="h-[20px] shrink-0 bg-[#f2f2f2] border-t-2 border-[#c8c8c8] flex text-[12px] text-[#333] whitespace-nowrap overflow-hidden">
      <div className="-ml-[12px] w-[120px] mt-[3px] h-[15px] pt-[3px] leading-[16px] border-r border-[#999]">计税方式：增值税</div>
      <div className="w-[240px] mt-[3px] h-[15px] pl-[18px] pt-[3px] leading-[16px] border-r border-[#999]">工程量清单项目计量规范(2013-广东)</div>
      <div className="w-[247px] mt-[3px] h-[15px] pl-[17px] pt-[3px] leading-[16px] border-r border-[#999]">广东省建筑与装饰工程综合定额(2010)</div>
      <div className="w-[90px] mt-[3px] h-[15px] pl-[17px] pt-[3px] leading-[16px] border-r border-[#999]">建筑工程</div>
      <div className="w-[91px] mt-[3px] h-[15px] pl-[17px] pt-[3px] leading-[16px] border-r border-[#999]">四类地区</div>
      <div className="ml-[28px] w-[80px] h-[18px] mt-[2px] rounded-t-[2px] bg-[#45b9e6] text-white text-center leading-[18px]">0分</div>
      <div className="ml-auto mt-[6px] flex gap-[24px] -mr-[6px]">
        <span className="w-[12px] h-[14px] border-2 border-[#8a8a8a]" />
        <span className="w-[12px] h-[14px] grid grid-cols-2 gap-[2px] content-start">
          <i className="h-[5px] bg-[#8a8a8a]" />
          <i className="h-[5px] bg-[#8a8a8a]" />
          <i className="h-[5px] bg-[#8a8a8a]" />
          <i className="h-[5px] bg-[#8a8a8a]" />
        </span>
        <span className="w-[12px] h-[14px] border-t-[5px] border-[#8a8a8a]" />
      </div>
    </div>
  );
}

export default function App() {
  return (
    <div className="relative w-[1400px] h-[834px] bg-white overflow-hidden flex flex-col font-['Noto_Sans_CJK_SC','Liberation_Sans',sans-serif]">
      <TopBars />
      <Ribbon />
      <SubTabs />
      <div className="flex-1 min-h-0 flex">
        <Sidebar />
        <div className="flex-1 min-w-0 flex flex-col">
          <DataGrid />
          <PricePanel />
        </div>
      </div>
      <StatusBar />
      <Dialog />
    </div>
  );
}
